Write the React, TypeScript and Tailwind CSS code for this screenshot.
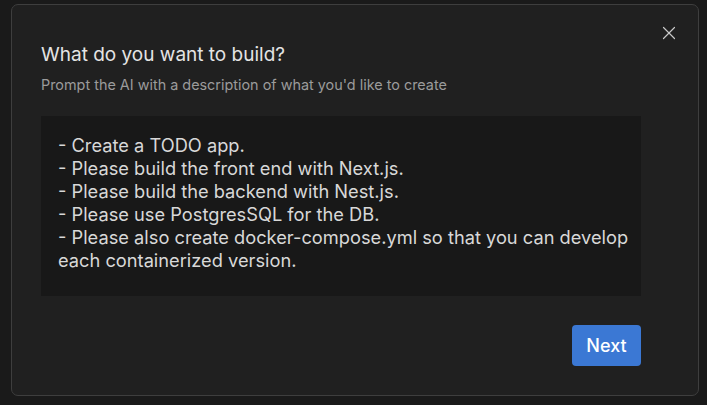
import { X } from "lucide-react";

const prompt = `- Create a TODO app.
- Please build the front end with Next.js.
- Please build the backend with Nest.js.
- Please use PostgresSQL for the DB.
- Please also create docker-compose.yml so that you can develop each containerized version.`;

export default function App() {
  return (
    <div className="w-[707px] h-[405px] bg-[#1a1a1a] overflow-hidden font-['Inter',sans-serif]">
      {/* sliver of the page behind the modal */}
      <div className="h-[4px] overflow-hidden">
        <div className="-mt-[13px] pl-[1px] italic text-[15px] leading-[16px] text-[#8a8a8a] font-['DejaVu_Sans_Mono',monospace]">
          in:
        </div>
      </div>
      <div className="relative ml-[11px] w-[688px] h-[392px] rounded-[7px] border border-[#3e3e3e] bg-[#202020] flex flex-col px-[29px] pt-[38px]">
        <button className="absolute top-[17px] right-[18px] text-[#c8c8c8]">
          <X size={22} strokeWidth={1.3} />
        </button>
        <h2 className="text-[19px] leading-[24px] font-normal text-[#e4e4e4]">
          What do you want to build?
        </h2>
        <p className="mt-[8px] text-[14.4px] leading-[20px] text-[#9b9b9b]">
          Prompt the AI with a description of what you'd like to create
        </p>
        <textarea
          className="mt-[21px] w-[600px] h-[180px] bg-[#181818] resize-none outline-none pl-[17px] pr-[6px] pt-[18px] text-[18.25px] leading-[23px] text-[#d8d8d8]"
          defaultValue={prompt}
        />
        <div className="flex justify-end w-[600px] mt-[29px]">
          <button className="w-[69px] h-[41px] rounded-[4px] bg-[#3b78d4] text-white text-[18px] font-medium">
            Next
          </button>
        </div>
      </div>
    </div>
  );
}
